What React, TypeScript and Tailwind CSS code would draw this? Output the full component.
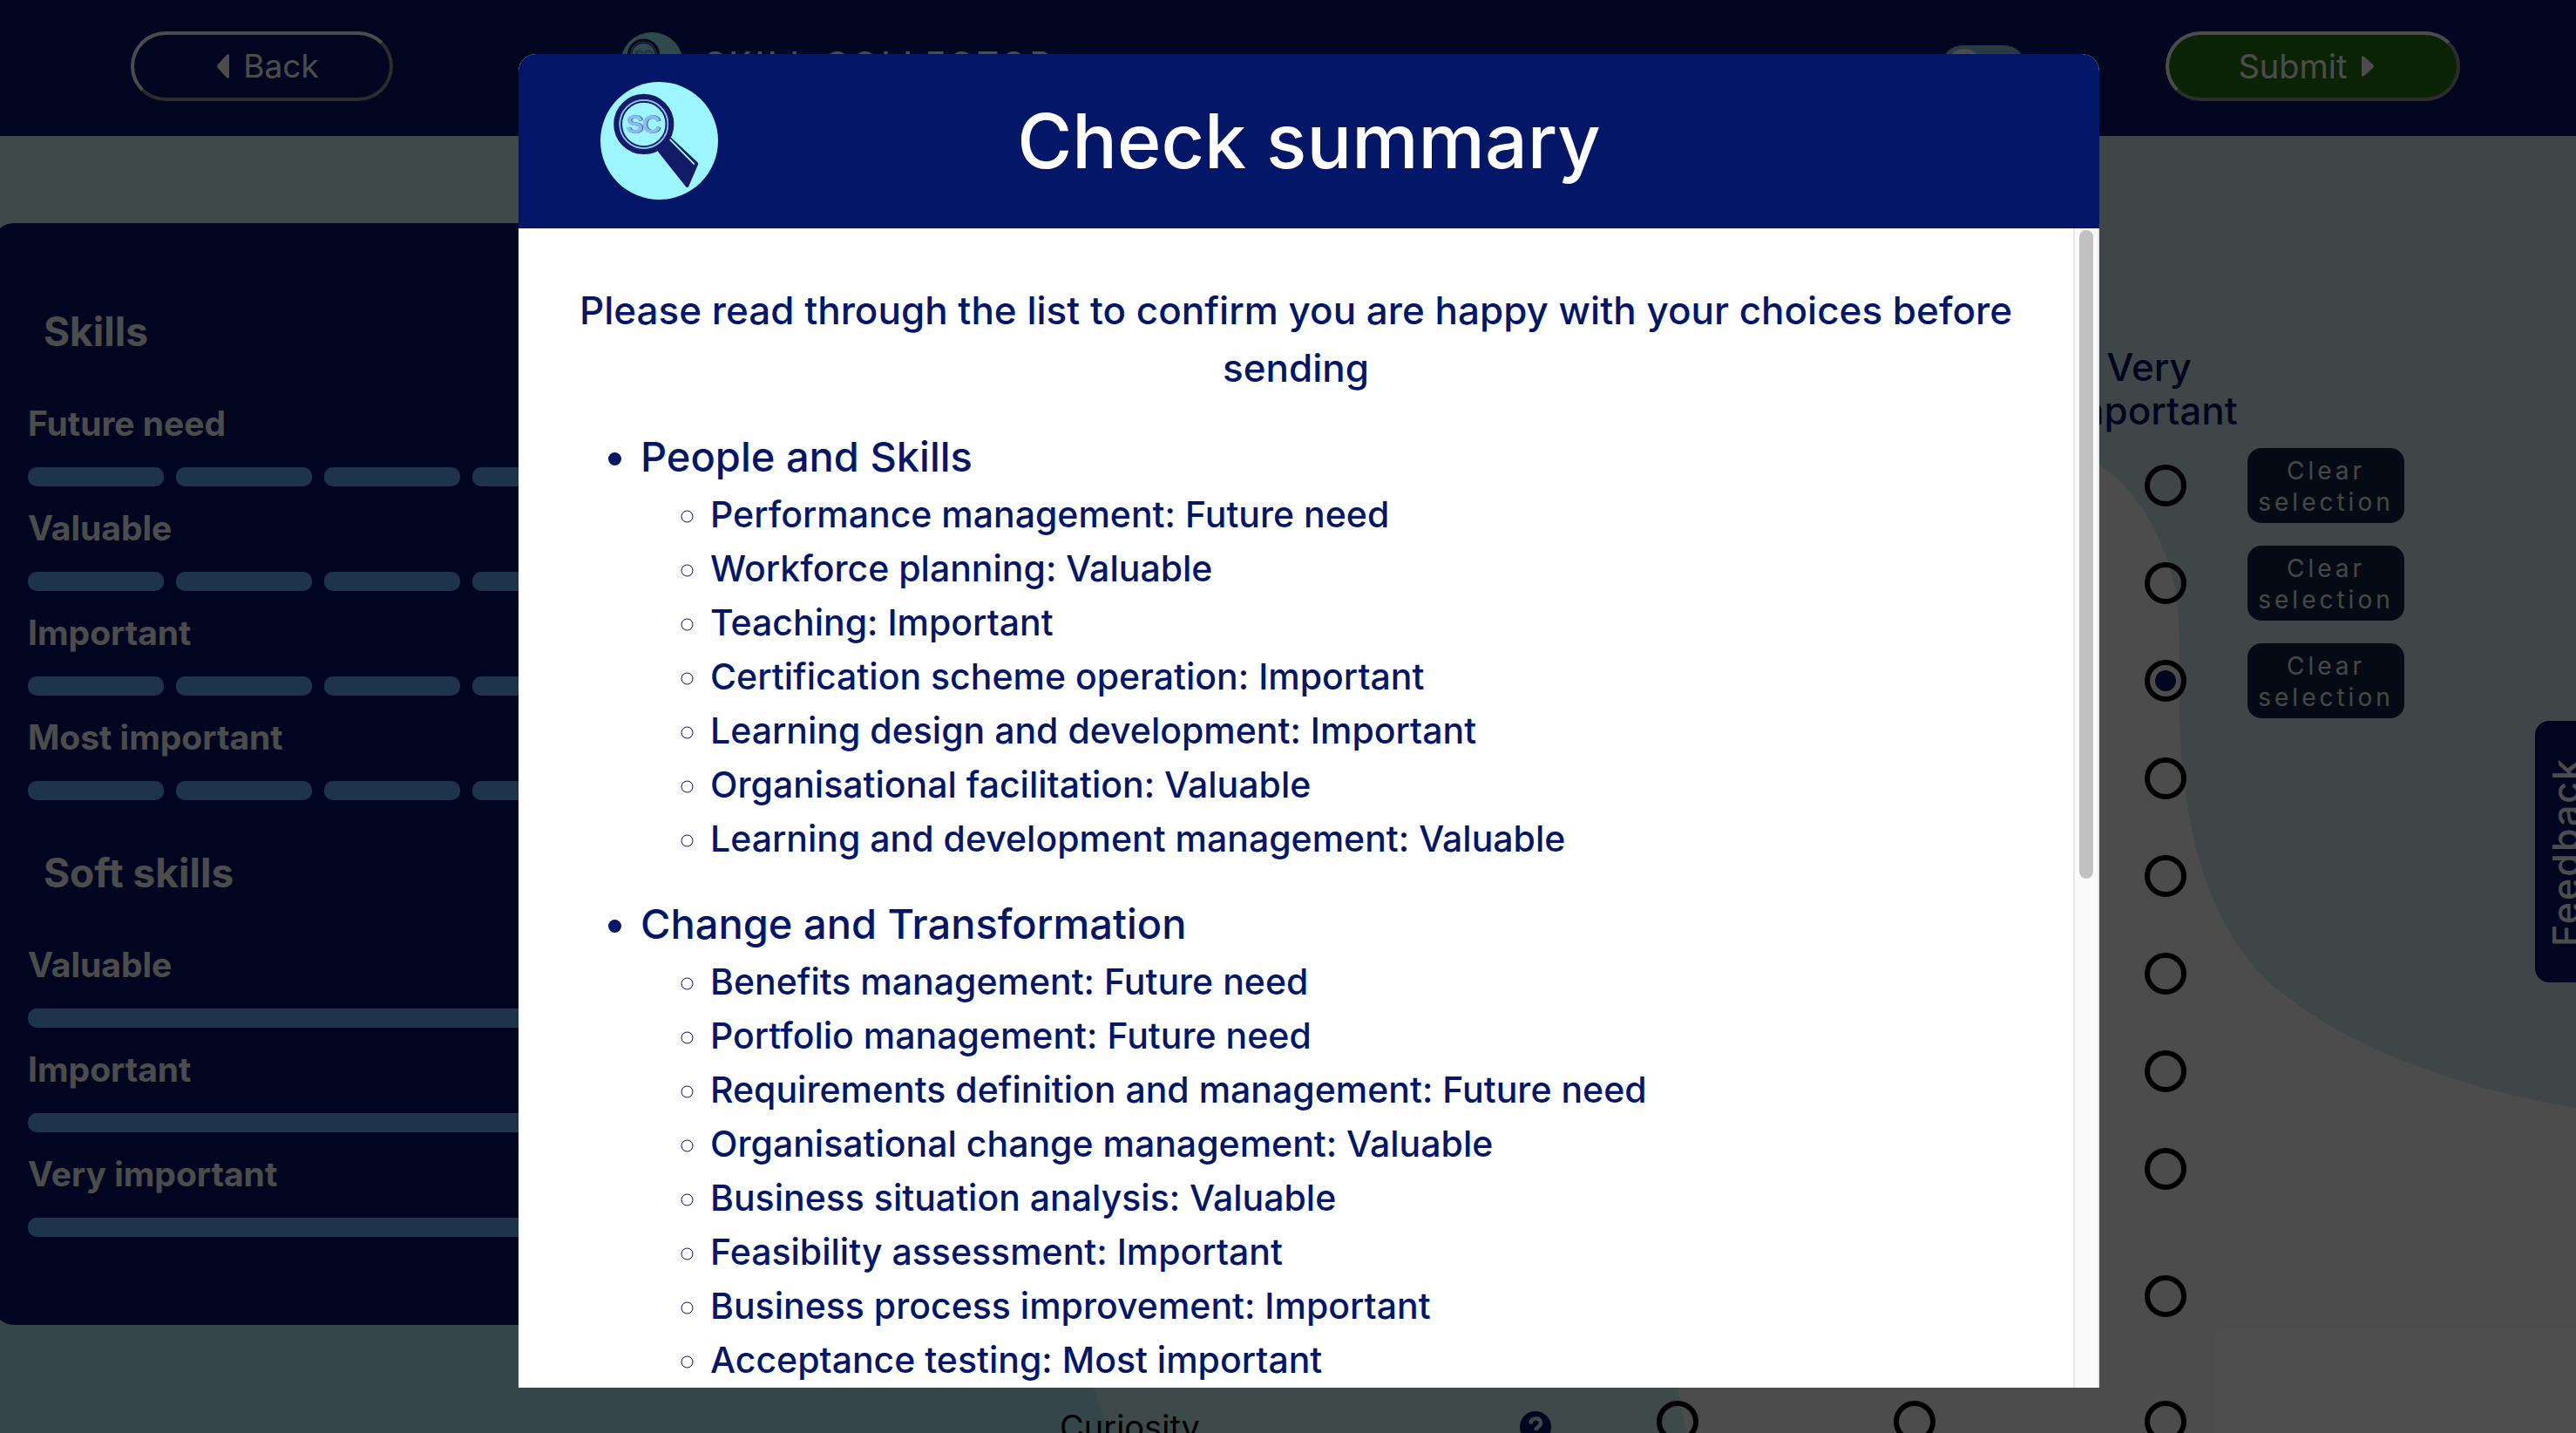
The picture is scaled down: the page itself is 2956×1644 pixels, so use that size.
import React from "react";

type Meter = { label: string; segments: number };

const skillMeters: Meter[] = [
  { label: "Future need", segments: 5 },
  { label: "Valuable", segments: 5 },
  { label: "Important", segments: 5 },
  { label: "Most important", segments: 5 },
];

const softSkillMeters: Meter[] = [
  { label: "Valuable", segments: 1 },
  { label: "Important", segments: 1 },
  { label: "Very important", segments: 1 },
];

const summary = [
  {
    title: "People and Skills",
    items: [
      "Performance management: Future need",
      "Workforce planning: Valuable",
      "Teaching: Important",
      "Certification scheme operation: Important",
      "Learning design and development: Important",
      "Organisational facilitation: Valuable",
      "Learning and development management: Valuable",
    ],
  },
  {
    title: "Change and Transformation",
    items: [
      "Benefits management: Future need",
      "Portfolio management: Future need",
      "Requirements definition and management: Future need",
      "Organisational change management: Valuable",
      "Business situation analysis: Valuable",
      "Feasibility assessment: Important",
      "Business process improvement: Important",
      "Acceptance testing: Most important",
    ],
  },
];

function Logo({ className }: { className: string }) {
  return (
    <svg viewBox="0 0 404 404" className={className} role="img" aria-label="Skill Collector">
      <circle cx="202" cy="202" r="202" fill="#9df6fd" />
      <path d="M195 236 L242 190 L333 275 Q337 279 335 284 L303 358 Q299 365 293 359 Z" fill="#131b66" />
      <path d="M239 198 L321 281" stroke="#9df6fd" strokeWidth="6" strokeLinecap="round" />
      <circle cx="149" cy="145" r="94" fill="#9df6fd" stroke="#131b66" strokeWidth="19" />
      <circle cx="149" cy="145" r="83" fill="none" stroke="#8fb8f0" strokeWidth="4" />
      <circle cx="149" cy="145" r="77" fill="#9df6fd" stroke="#131b66" strokeWidth="6" />
      <text x="150" y="173" textAnchor="middle" fontSize="84" fontFamily="Liberation Sans, sans-serif" stroke="#2a3f8c" strokeWidth="5" fill="#2a3f8c">
        SC
      </text>
      <text x="147" y="175" textAnchor="middle" fontSize="84" fontFamily="Liberation Sans, sans-serif" stroke="#8bb9f3" strokeWidth="5" fill="#8bb9f3">
        SC
      </text>
    </svg>
  );
}

function Backdrop() {
  return (
    <svg viewBox="0 0 2956 1644" preserveAspectRatio="none" className="absolute inset-0 size-full" aria-hidden="true">
      <path d="M0 0 H2000 V600 C1700 900 1880 1300 1925 1591 L1935 1644 H0 Z" fill="#cff5f3" />
      <path d="M0 1300 H1160 C1220 1440 1245 1530 1255 1591 L1271 1644 H0 Z" fill="#aee9f7" />
      <path
        d="M1800 0 H2956 V1271 C2830 1250 2700 1205 2620 1140 C2540 1080 2502 960 2501 810 C2502 700 2500 670 2480 625 C2465 585 2440 555 2409 533 C2300 470 2000 560 1800 500 Z"
        fill="#d3e9f0"
      />
    </svg>
  );
}

function MeterGroup({ title, meters }: { title: string; meters: Meter[] }) {
  return (
    <section>
      <h2 className="mb-[54px] ml-[18px] text-[46px] leading-[56px] font-bold">{title}</h2>
      <div className="flex flex-col gap-6">
        {meters.map((m) => (
          <div key={m.label}>
            <h3 className="mb-[26px] text-[39px] leading-[48px] font-bold">{m.label}</h3>
            <div className="flex gap-3.5">
              {Array.from({ length: m.segments }, (_, i) => (
                <div key={i} className="h-[22px] flex-1 rounded-[10px] bg-[#67adf9]" />
              ))}
            </div>
          </div>
        ))}
      </div>
    </section>
  );
}

function Choice({ row, value, checked }: { row: number; value: string; checked?: boolean }) {
  return (
    <input
      type="radio"
      name={`skill-${row}`}
      aria-label={value}
      defaultChecked={checked}
      className="size-12 appearance-none justify-self-center rounded-full border-[6px] border-black bg-clip-content p-1.5 checked:bg-[#031668]"
    />
  );
}

function ChoiceRow({ row, name }: { row: number; name?: string }) {
  const tall = row >= 8;
  return (
    <div
      className={`grid shrink-0 grid-cols-[1fr_170px_156px_388px_188px_180px] items-center ${tall ? "h-36" : "h-28"} ${row === 8 ? "mt-[18px]" : ""}`}
    >
      <span className="pt-3 pl-[316px] text-[38px] leading-[48px] text-black">{name}</span>
      <span className="flex justify-center pt-3">
        {name && (
          <button aria-label={`About ${name}`} className="size-9">
            <svg viewBox="0 0 36 36" className="size-9">
              <circle cx="18" cy="18" r="18" fill="#031668" />
              <path d="M12.5 14.5 C12.5 6.500 24 6.500 24 13.500 C24 18 18.500 17.500 18.500 22" fill="none" stroke="#cff7f3" strokeWidth="4.500" />
              <circle cx="18.500" cy="27.500" r="2.800" fill="#cff7f3" />
            </svg>
          </button>
        )}
      </span>
      <Choice row={row} value="Valuable" />
      <Choice row={row} value="Important" />
      <Choice row={row} value="Very important" checked={row === 2} />
      {row < 3 && (
        <button className="h-[86px] rounded-2xl bg-[#112549] pt-0.5 text-[28px] leading-9 tracking-[4px] text-[#e6f0f0]">
          Clear
          <br />
          selection
        </button>
      )}
    </div>
  );
}

export default function App() {
  return (
    <div className="relative flex h-screen flex-col overflow-hidden bg-white font-['Inter',sans-serif] text-[#031668]">
      <Backdrop />

      <header className="relative flex h-[156px] shrink-0 items-center bg-[#031668] pr-[133px] pb-1 pl-[150px] text-white">
        <button className="flex h-20 w-[301px] items-center justify-center gap-4 rounded-[40px] border-4 border-t-white border-r-[#949494] border-b-[#949494] border-l-white pl-3.5 text-[37px]">
          <svg viewBox="0 0 14 28" className="h-7 w-3.5" aria-hidden="true">
            <path d="M14 2 V26 Q14 29 11 27 L1 16 Q-1 14 1 12 L11 1 Q14 -1 14 2 Z" fill="currentColor" />
          </svg>
          Back
        </button>
        <div className="mb-1.5 ml-[261px] flex items-center gap-6">
          <Logo className="size-[72px]" />
          <span className="text-[38px] font-medium tracking-[4px]">SKILL COLLECTOR</span>
        </div>
        <button role="switch" aria-checked="false" aria-label="Theme" className="mr-[161px] ml-auto flex h-12 w-24 items-center rounded-full bg-[#8cc1e6] px-1.5">
          <span className="size-10 rounded-full bg-white" />
        </button>
        <button className="flex h-20 w-[338px] items-center justify-center gap-4 rounded-[40px] border-4 border-t-white border-r-[#949494] border-b-[#949494] border-l-white bg-[#257511] pr-4 text-[38px]">
          Submit
          <svg viewBox="0 0 14 24" className="h-6 w-3.5" aria-hidden="true">
            <path d="M0 2 V22 Q0 25 3 23 L13 14 Q15 12 13 10 L3 1 Q0 -1 0 2 Z" fill="currentColor" />
          </svg>
        </button>
      </header>

      <main className="relative flex min-h-0 flex-1 items-start">
        <aside className="mt-[100px] -ml-2 flex w-[908px] shrink-0 flex-col gap-[55px] rounded-3xl bg-[#031668] pt-24 pr-8 pb-[101px] pl-10 text-white">
          <MeterGroup title="Skills" meters={skillMeters} />
          <MeterGroup title="Soft skills" meters={softSkillMeters} />
        </aside>

        <section className="flex flex-1 flex-col pt-60 pr-[197px]">
          <h3 className="mr-[188px] mb-[5px] w-[210px] self-end text-center text-[44px] leading-[50px] font-medium">
            Very important
          </h3>
          {Array.from({ length: 10 }, (_, i) => (
            <ChoiceRow key={i} row={i} name={i === 9 ? "Curiosity" : undefined} />
          ))}
        </section>
      </main>

      <button className="absolute top-[827px] -right-[23px] flex h-[300px] w-[70px] rotate-180 items-center justify-center rounded-r-2xl bg-[#031668] text-[43px] font-medium tracking-[2px] text-white [writing-mode:vertical-rl]">
        Feedback
      </button>

      <div className="absolute inset-0 flex bg-black/70 pt-[62px] pr-[547px] pb-[52px] pl-[595px]">
        <div role="dialog" aria-modal="true" aria-labelledby="summary-title" className="flex flex-1 flex-col overflow-hidden rounded-t-[20px] bg-white">
          <div className="relative flex h-[200px] shrink-0 items-center justify-center bg-[#031668]">
            <Logo className="absolute top-8 left-[94px] size-[135px]" />
            <h1 id="summary-title" className="text-[86px] leading-[100px] font-medium text-white">
              Check summary
            </h1>
          </div>
          <div className="flex min-h-0 flex-1">
            <div className="flex-1 overflow-y-auto pt-[61px] [scrollbar-width:none]">
              <p className="mb-9 px-12 text-center text-[44px] leading-[66px] font-medium">
                Please read through the list to confirm you are happy with your choices before sending
              </p>
              <ul className="flex list-disc flex-col gap-[34px] pl-[140px] font-medium">
                {summary.map((group) => (
                  <li key={group.title} className="text-[47px] leading-[66px]">
                    {group.title}
                    <ul className="mt-0.5 list-[circle] pl-20 text-[41px] leading-[62px]">
                      {group.items.map((item) => (
                        <li key={item}>{item}</li>
                      ))}
                    </ul>
                  </li>
                ))}
              </ul>
            </div>
            <div className="flex w-[30px] justify-center border-r-2 border-l-2 border-[#e8e8e8] bg-[#fafafa] pt-0.5" aria-hidden="true">
              <div className="h-[56%] w-4 rounded-full bg-[#c1c1c1]" />
            </div>
          </div>
        </div>
      </div>
    </div>
  );
}
